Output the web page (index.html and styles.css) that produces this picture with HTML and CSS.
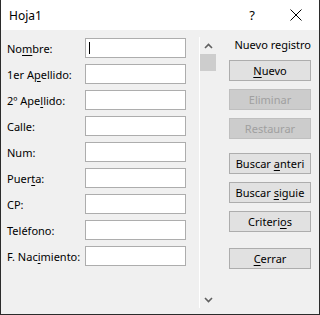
FILE: index.html
```html
<!DOCTYPE html>
<html lang="es">
<head>
  <meta charset="UTF-8">
  <title>Hoja1</title>
  <link rel="stylesheet" href="styles.css">
</head>
<body>
  <div class="dialog">
    <div class="dialog-titlebar">
      <span class="dialog-title">Hoja1</span>
      <span class="dialog-help">?</span>
      <span class="dialog-close">
        <svg width="12" height="12" viewBox="0 0 12 12"><path d="M0.5 0.5 L11.5 11.5 M11.5 0.5 L0.5 11.5" stroke="#000" stroke-width="1" fill="none"/></svg>
      </span>
    </div>

    <div class="dialog-body">
      <div class="form-grid">
        <label class="form-label">No<u>m</u>bre:</label>
        <div class="form-field"><span class="caret"></span></div>
        <label class="form-label">1er A<u>p</u>ellido:</label>
        <div class="form-field"></div>
        <label class="form-label">2º Ape<u>l</u>lido:</label>
        <div class="form-field"></div>
        <label class="form-label">Calle:</label>
        <div class="form-field"></div>
        <label class="form-label">Num:</label>
        <div class="form-field"></div>
        <label class="form-label">Puer<u>t</u>a:</label>
        <div class="form-field"></div>
        <label class="form-label">CP:</label>
        <div class="form-field"></div>
        <label class="form-label">Teléfono:</label>
        <div class="form-field"></div>
        <label class="form-label">F. Nac<u>i</u>miento:</label>
        <div class="form-field"></div>
      </div>

      <div class="scrollbar">
        <div class="scroll-arrow">
          <svg width="9" height="6" viewBox="0 0 9 6"><path d="M1 5 L4.5 1.5 L8 5" stroke="#606060" stroke-width="1.6" fill="none"/></svg>
        </div>
        <div class="scroll-thumb"></div>
        <div class="scroll-track"></div>
        <div class="scroll-arrow">
          <svg width="9" height="6" viewBox="0 0 9 6"><path d="M1 1 L4.5 4.5 L8 1" stroke="#606060" stroke-width="1.6" fill="none"/></svg>
        </div>
      </div>

      <div class="actions">
        <div class="record-status">Nuevo registro</div>
        <button class="action-btn" type="button"><u>N</u>uevo</button>
        <button class="action-btn" type="button" disabled>Eliminar</button>
        <button class="action-btn" type="button" disabled>Restaurar</button>
        <button class="action-btn group-start" type="button">Buscar <u>a</u>nteri</button>
        <button class="action-btn" type="button">Buscar <u>s</u>iguie</button>
        <button class="action-btn" type="button">Criteri<u>o</u>s</button>
        <button class="action-btn close-btn" type="button"><u>C</u>errar</button>
      </div>
    </div>
  </div>
</body>
</html>
```

FILE: styles.css
```css
html, body {
  margin: 0;
  padding: 0;
  width: 100%;
  height: 100%;
  overflow: hidden;
}

.dialog {
  width: 320px;
  height: 315px;
  box-sizing: border-box;
  border: 1px solid #2b2b2b;
  border-top: none;
  background-color: #f0f0f0;
  font-family: "Noto Sans", sans-serif;
  font-size: 11px;
  color: #000;
  display: flex;
  flex-direction: column;
}

.dialog-titlebar {
  height: 30px;
  background-color: #fff;
  display: flex;
  align-items: center;
  padding-left: 8px;
  flex-shrink: 0;
}

.dialog-title {
  font-size: 12px;
  flex: 1;
}

.dialog-help {
  font-size: 13px;
  width: 14px;
  text-align: center;
  margin-right: 31px;
}

.dialog-close {
  display: flex;
  margin-right: 17px;
}

.dialog-body {
  flex: 1;
  display: flex;
  align-items: flex-start;
}

.form-grid {
  display: grid;
  grid-template-columns: 78px 101px;
  grid-auto-rows: 20px;
  row-gap: 6px;
  padding: 8px 0 0 6px;
}

.form-label {
  display: flex;
  align-items: center;
  white-space: nowrap;
}

.form-label u {
  text-underline-offset: 2px;
}

.form-field {
  background-color: #fff;
  border: 1px solid #adadad;
  box-sizing: border-box;
  position: relative;
}

.caret {
  position: absolute;
  left: 3px;
  top: 3px;
  width: 1px;
  height: 12px;
  background-color: #000;
}

.scrollbar {
  margin: 7px 0 0 13px;
  width: 16px;
  height: 271px;
  border-left: 1px solid #fff;
  display: flex;
  flex-direction: column;
}

.scroll-arrow {
  height: 17px;
  display: flex;
  align-items: center;
  justify-content: center;
}

.scroll-thumb {
  height: 17px;
  background-color: #cdcdcd;
}

.scroll-track {
  flex: 1;
}

.actions {
  margin-left: 13px;
  padding-top: 8px;
  width: 82px;
  display: flex;
  flex-direction: column;
}

.record-status {
  height: 14px;
  line-height: 14px;
  text-align: right;
  white-space: nowrap;
  margin-bottom: 8px;
}

.action-btn {
  height: 21px;
  width: 82px;
  margin: 0 0 8px 0;
  padding: 0;
  background-color: #e1e1e1;
  border: 1px solid #adadad;
  border-radius: 0;
  font-family: "Noto Sans", sans-serif;
  font-size: 11px;
  color: #000;
  white-space: nowrap;
  overflow: hidden;
}

.action-btn u {
  text-underline-offset: 2px;
}

.action-btn:disabled {
  background-color: #cccccc;
  border-color: #bfbfbf;
  color: #a0a0a0;
}

.group-start {
  margin-top: 6px;
}

.close-btn {
  margin-top: 8px;
}
```
